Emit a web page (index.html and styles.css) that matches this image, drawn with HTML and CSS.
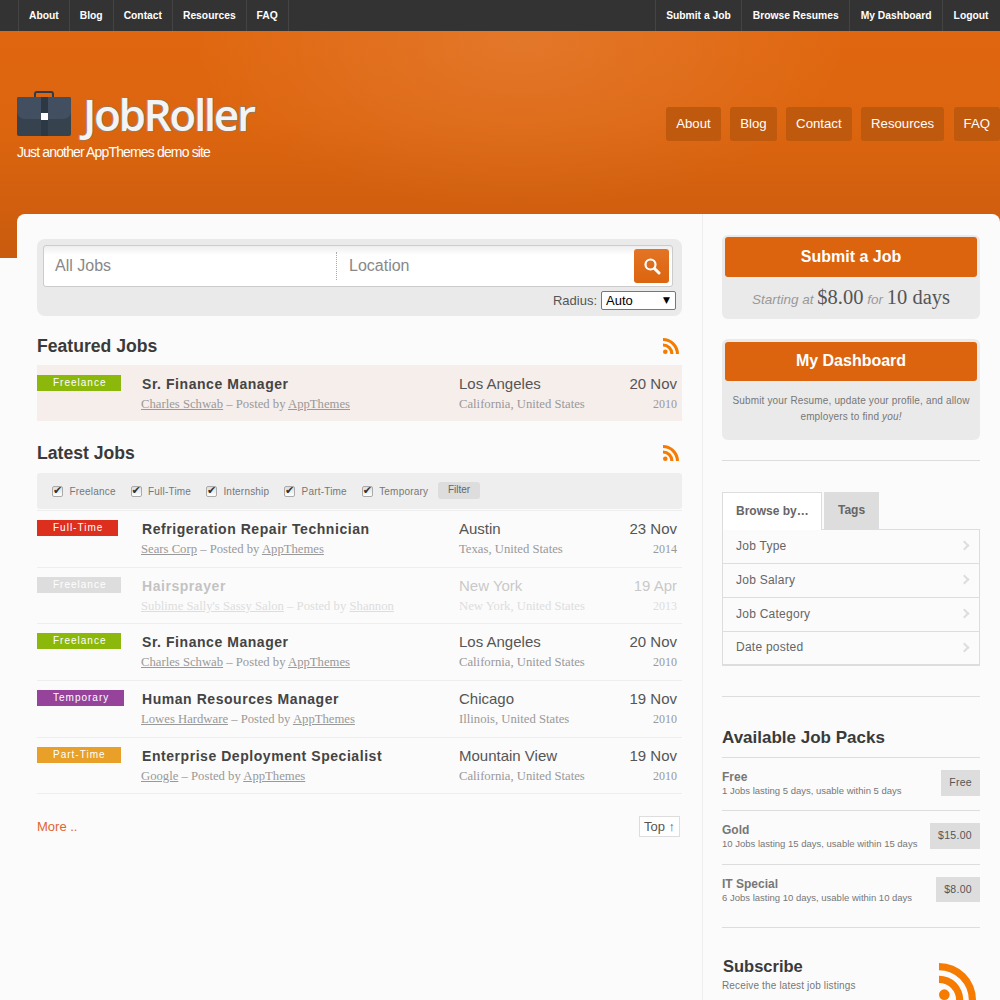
FILE: index.html
```html
<!DOCTYPE html>
<html lang="en">
<head>
<meta charset="utf-8">
<title>JobRoller</title>
<link rel="stylesheet" href="styles.css">
</head>
<body>
<nav class="topbar">
  <ul class="toplinks left">
    <li><a>About</a></li><li><a>Blog</a></li><li><a>Contact</a></li><li><a>Resources</a></li><li><a>FAQ</a></li>
  </ul>
  <ul class="toplinks right">
    <li><a>Submit a Job</a></li><li><a>Browse Resumes</a></li><li><a>My Dashboard</a></li><li><a>Logout</a></li>
  </ul>
</nav>
<header class="masthead">
  <div class="brand">
    <div class="logo">
      <svg class="case" width="54" height="45" viewBox="0 0 54 45">
        <path d="M18 7V3a2 2 0 0 1 2-2h14a2 2 0 0 1 2 2v4" fill="none" stroke="#2f3b48" stroke-width="2"/>
        <rect x="0" y="6" width="54" height="39" rx="2" fill="#36434f"/>
        <path d="M0 8a2 2 0 0 1 2-2h50a2 2 0 0 1 2 2v14q-2 6-9 6H9q-7 0-9-6z" fill="#414f61"/>
        <rect x="24" y="6" width="7" height="39" fill="#2c3844"/>
        <rect x="24" y="22" width="7" height="7" fill="#fff"/>
      </svg>
      <span class="logotext">JobRoller</span>
    </div>
    <p class="tagline">Just another AppThemes demo site</p>
  </div>
  <ul class="mainnav">
    <li>About</li><li>Blog</li><li>Contact</li><li>Resources</li><li>FAQ</li>
  </ul>
</header>
<div class="wrapper">
  <main class="content">
    <form class="search">
      <div class="searchbar">
        <span class="field what">All Jobs</span>
        <span class="field where">Location</span>
        <span class="searchbtn">
          <svg width="18" height="18" viewBox="0 0 18 18"><circle cx="7.5" cy="7.5" r="5" fill="none" stroke="#fff" stroke-width="2.2"/><path d="M11.5 11.5L16 16" stroke="#fff" stroke-width="3" stroke-linecap="round"/></svg>
        </span>
      </div>
      <div class="radius"><label>Radius:</label><span class="selectwrap"><select><option>Auto</option></select></span></div>
    </form>

    <div class="sectionhead first"><h2>Featured Jobs</h2>
      <svg class="rss" width="17" height="16" viewBox="0 0 17 16"><circle cx="2.3" cy="13.7" r="2.3" fill="#f57c00"/><path d="M0 5.5a10.5 10.5 0 0 1 10.5 10.5H7.4A7.4 7.4 0 0 0 0 8.6zM0 0a16 16 0 0 1 16 16h-3.1A12.9 12.9 0 0 0 0 3.1z" fill="#f57c00"/></svg>
    </div>
    <article class="job featured">
      <div class="tagcol"><span class="tag freelance">Freelance</span></div>
      <div class="titlecol"><h3>Sr. Finance Manager</h3><p class="meta"><a>Charles Schwab</a> – Posted by <a>AppThemes</a></p></div>
      <div class="loccol"><strong>Los Angeles</strong><p class="meta">California, United States</p></div>
      <div class="datecol"><strong>20 Nov</strong><p class="year">2010</p></div>
    </article>

    <div class="sectionhead"><h2>Latest Jobs</h2>
      <svg class="rss" width="17" height="16" viewBox="0 0 17 16"><circle cx="2.3" cy="13.7" r="2.3" fill="#f57c00"/><path d="M0 5.5a10.5 10.5 0 0 1 10.5 10.5H7.4A7.4 7.4 0 0 0 0 8.6zM0 0a16 16 0 0 1 16 16h-3.1A12.9 12.9 0 0 0 0 3.1z" fill="#f57c00"/></svg>
    </div>
    <div class="filters">
      <label><input type="checkbox" checked>Freelance</label>
      <label><input type="checkbox" checked>Full-Time</label>
      <label><input type="checkbox" checked>Internship</label>
      <label><input type="checkbox" checked>Part-Time</label>
      <label><input type="checkbox" checked>Temporary</label>
      <span class="filterbtn">Filter</span>
    </div>
    <div class="joblist">
      <article class="job">
        <div class="tagcol"><span class="tag fulltime">Full-Time</span></div>
        <div class="titlecol"><h3>Refrigeration Repair Technician</h3><p class="meta"><a>Sears Corp</a> – Posted by <a>AppThemes</a></p></div>
        <div class="loccol"><strong>Austin</strong><p class="meta">Texas, United States</p></div>
        <div class="datecol"><strong>23 Nov</strong><p class="year">2014</p></div>
      </article>
      <article class="job expired">
        <div class="tagcol"><span class="tag lapsed">Freelance</span></div>
        <div class="titlecol"><h3>Hairsprayer</h3><p class="meta"><a>Sublime Sally's Sassy Salon</a> – Posted by <a>Shannon</a></p></div>
        <div class="loccol"><strong>New York</strong><p class="meta">New York, United States</p></div>
        <div class="datecol"><strong>19 Apr</strong><p class="year">2013</p></div>
      </article>
      <article class="job">
        <div class="tagcol"><span class="tag freelance">Freelance</span></div>
        <div class="titlecol"><h3>Sr. Finance Manager</h3><p class="meta"><a>Charles Schwab</a> – Posted by <a>AppThemes</a></p></div>
        <div class="loccol"><strong>Los Angeles</strong><p class="meta">California, United States</p></div>
        <div class="datecol"><strong>20 Nov</strong><p class="year">2010</p></div>
      </article>
      <article class="job">
        <div class="tagcol"><span class="tag temporary">Temporary</span></div>
        <div class="titlecol"><h3>Human Resources Manager</h3><p class="meta"><a>Lowes Hardware</a> – Posted by <a>AppThemes</a></p></div>
        <div class="loccol"><strong>Chicago</strong><p class="meta">Illinois, United States</p></div>
        <div class="datecol"><strong>19 Nov</strong><p class="year">2010</p></div>
      </article>
      <article class="job">
        <div class="tagcol"><span class="tag parttime">Part-Time</span></div>
        <div class="titlecol"><h3>Enterprise Deployment Specialist</h3><p class="meta"><a>Google</a> – Posted by <a>AppThemes</a></p></div>
        <div class="loccol"><strong>Mountain View</strong><p class="meta">California, United States</p></div>
        <div class="datecol"><strong>19 Nov</strong><p class="year">2010</p></div>
      </article>
    </div>
    <div class="listfoot"><a class="more">More ..</a><a class="totop">Top ↑</a></div>
  </main>

  <aside class="sidebar">
    <section class="cta">
      <a class="ctabtn">Submit a Job</a>
      <p class="price"><em>Starting at</em> <b>$8.00</b> <em>for</em> <b>10 days</b></p>
    </section>
    <section class="cta dash">
      <a class="ctabtn">My Dashboard</a>
      <p class="blurb">Submit your Resume, update your profile, and allow employers to find <em>you!</em></p>
    </section>
    <hr class="rule">
    <div class="tabs"><span class="tab active">Browse by…</span><span class="tab">Tags</span></div>
    <ul class="browse">
      <li>Job Type<i class="chev"></i></li>
      <li>Job Salary<i class="chev"></i></li>
      <li>Job Category<i class="chev"></i></li>
      <li>Date posted<i class="chev"></i></li>
    </ul>
    <hr class="rule second">
    <h2 class="packhead">Available Job Packs</h2>
    <div class="pack">
      <div><h4>Free</h4><p>1 Jobs lasting 5 days, usable within 5 days</p></div><span class="cost">Free</span>
    </div>
    <div class="pack">
      <div><h4>Gold</h4><p>10 Jobs lasting 15 days, usable within 15 days</p></div><span class="cost">$15.00</span>
    </div>
    <div class="pack last">
      <div><h4>IT Special</h4><p>6 Jobs lasting 10 days, usable within 10 days</p></div><span class="cost">$8.00</span>
    </div>
    <div class="subscribe">
      <div><h2>Subscribe</h2><p>Receive the latest job listings</p></div>
      <svg width="37" height="37" viewBox="0 0 16 16"><circle cx="2.3" cy="13.7" r="2.3" fill="#f57c00"/><path d="M0 5.5a10.5 10.5 0 0 1 10.5 10.5H7.4A7.4 7.4 0 0 0 0 8.6zM0 0a16 16 0 0 1 16 16h-3.1A12.9 12.9 0 0 0 0 3.1z" fill="#f57c00"/></svg>
    </div>
  </aside>
</div>
</body>
</html>
```
FILE: styles.css
```css
* { box-sizing: border-box; }
html, body { margin: 0; height: 1000px; overflow: hidden; }
body { background: #fbfbfb; font-family: "Liberation Sans", Arial, sans-serif; color: #444; }
ul { list-style: none; margin: 0; padding: 0; }
p, h2, h3, h4 { margin: 0; }

.topbar { height: 31px; background: #333; display: flex; justify-content: space-between; }
.toplinks { display: flex; }
.toplinks.left { padding-left: 18px; }
.toplinks li { border-left: 1px solid #444; display: flex; }
.toplinks.left li:last-child { border-right: 1px solid #444; }
.toplinks a { color: #fff; font-size: 10.3px; font-weight: 700; line-height: 31px; padding: 0 10px; }
.toplinks.right { padding-right: 1px; }
.toplinks.right a { padding: 0 10.5px; }

.masthead {
  height: 227px;
  background: radial-gradient(ellipse 330px 170px at 520px 10px, rgba(255,255,255,.11), rgba(255,255,255,0)),
              linear-gradient(#e0670f 0, #dd650f 40%, #c95b0e 100%);
  display: flex;
  justify-content: space-between;
  align-items: flex-start;
  padding-left: 17px;
}
.brand { padding-top: 60px; }
.logo { display: flex; align-items: flex-end; gap: 12px; height: 45px; }
.logotext {
  font-family: "Open Sans", sans-serif;
  font-weight: 600;
  font-size: 44px;
  line-height: 50px;
  letter-spacing: -2.3px;
  color: #f4f4f4;
  -webkit-text-stroke: 1.5px #8a7f72;
  paint-order: stroke fill;
  position: relative;
  top: 3px;
}
.tagline { color: #fff; font-size: 14px; letter-spacing: -.85px; margin-top: 8px; }
.mainnav { display: flex; gap: 9.5px; margin-top: 76px; }
.mainnav li { height: 34px; line-height: 33px; padding: 0 10px; background: #bf590e; color: #fff; border-radius: 3px; font-size: 13.2px; }

.wrapper { margin: -44px 0 0 17px; height: 830px; background: #fbfbfb; border-radius: 8px 8px 0 0; display: flex; position: relative; }
.content { width: 685px; padding: 25px 20px 0; }
.search { height: 77px; background: #eaeaea; border-radius: 8px; padding: 6px; }
.searchbar {
  width: 630px; height: 42px; border: 1px solid #ccc; border-radius: 3px;
  background: linear-gradient(#eee 0, #fff 9px);
  display: flex; align-items: center; position: relative;
}
.field { font-size: 16px; color: #888; }
.what { width: 293px; padding-left: 11px; height: 28px; line-height: 28px; border-right: 1px dotted #aaa; }
.where { padding-left: 12px; height: 28px; line-height: 28px; }
.searchbtn {
  position: absolute; right: 3px; top: 3px; width: 35px; height: 34px; border-radius: 3px;
  background: linear-gradient(#e37424, #dc640f);
  display: flex; align-items: center; justify-content: center;
}
.radius { display: flex; justify-content: flex-end; align-items: center; gap: 4px; margin-top: 4px; font-size: 13px; color: #555; }
.selectwrap { position: relative; display: block; height: 19px; }
.selectwrap::after { content: "▼"; position: absolute; right: 6px; top: 4px; font: 9px/10px "DejaVu Sans", sans-serif; color: #000; pointer-events: none; }
.radius select { appearance: none; -webkit-appearance: none; display: block; width: 75px; height: 19px; background: #fff; border: 1px solid #777; border-radius: 2px; font: 13px "Liberation Sans", sans-serif; color: #000; padding: 0 0 0 4px; }

.sectionhead { display: flex; justify-content: space-between; align-items: center; height: 24px; margin: 20px 0 8px; padding-right: 2px; }
.sectionhead.first { margin: 18px 0 7px; }
.sectionhead h2 { font-size: 17.6px; line-height: 24px; color: #3a3a3a; }

.job { display: flex; height: 56.7px; padding-top: 9px; border-bottom: 1px solid #eee; }
.job.featured { height: 56px; padding-top: 10px; background: #f6eeeb; border-bottom: 0; }
.job.expired .titlecol, .job.expired .loccol, .job.expired .datecol { opacity: .3; }
.tagcol { width: 104px; }
.titlecol { width: 318px; }
.loccol { width: 140px; }
.datecol { width: 78px; text-align: right; }
.tag { display: inline-block; height: 16px; line-height: 15px; padding: 0 15px 0 16px; color: #fff; font-size: 10px; letter-spacing: 1px; vertical-align: top; }
.freelance { background: #8cb80b; }
.fulltime { background: #dc2f1e; }
.temporary { background: #96439b; }
.parttime { background: #e8a028; }
.lapsed { background: #ddd; }
.job h3 { font-size: 14px; line-height: 18px; font-weight: 700; letter-spacing: .55px; color: #444; padding-left: 1px; }
.job strong { display: block; font-size: 15px; line-height: 18px; font-weight: 400; color: #555; }
.meta { font-family: "Liberation Serif", serif; font-size: 12.7px; line-height: 16px; margin-top: 3px; color: #999; }
.meta a { text-decoration: underline; }
.year { font-family: "Liberation Serif", serif; font-size: 12px; line-height: 16px; margin-top: 3px; color: #999; }

.filters { height: 36px; background: #eee; border-radius: 3px; display: flex; align-items: center; padding: 0 0 0 15px; font-size: 10px; letter-spacing: .2px; color: #777; margin-bottom: 1px; }
.filters label { display: flex; align-items: center; gap: 6.5px; margin-right: 14.75px; }
.filters input {
  appearance: none; -webkit-appearance: none; margin: 0; width: 11px; height: 11px;
  border: 1px solid #aaa; border-radius: 2px; background: linear-gradient(#ddd, #fff); position: relative;
}
.filters input::before { content: "✔"; position: absolute; left: 0; top: -2px; font: 700 11px/12px "DejaVu Sans", sans-serif; color: #333; }
.filterbtn { background: #ddd; color: #666; border-radius: 3px; height: 17px; line-height: 16px; padding: 0 10px; letter-spacing: 0; margin-left: -5px; margin-top: -2px; }
.joblist { border-top: 1px solid #eee; }

.listfoot { display: flex; justify-content: space-between; align-items: center; margin-top: 21.5px; padding-right: 2px; }
.more { color: #e0662c; font-size: 13px; }
.totop { border: 1px solid #ddd; background: #fff; width: 41px; height: 21px; line-height: 19px; text-align: center; font-size: 13px; color: #555; }

.sidebar { width: 298px; border-left: 1px solid #eee; padding: 21px 20px 0 19px; }
.cta { background: #eaeaea; border-radius: 6px; height: 84px; padding: 2px 3px; margin-bottom: 20px; }
.cta.dash { height: 101px; padding-top: 3px; margin-bottom: 20px; }
.ctabtn { display: block; height: 40px; line-height: 39px; background: #dc640f; border-radius: 3px; color: #fff; font-size: 16px; font-weight: 700; text-align: center; }
.dash .ctabtn { height: 39px; line-height: 38px; }
.price { text-align: center; line-height: 36px; margin-top: 2px; color: #999; font-size: 13.5px; }
.price b { font-family: "Liberation Serif", serif; font-weight: 400; font-size: 20.5px; color: #555; }
.blurb { font-size: 10px; line-height: 16px; letter-spacing: .15px; text-align: center; color: #777; margin-top: 12px; }
.rule { border: 0; border-top: 1px solid #ddd; margin: 0 0 31px; height: 1px; }
.rule.second { margin: 30px 0 0; }
.tabs { display: flex; gap: 2px; height: 37px; position: relative; }
.tab { background: #ddd; color: #666; font-size: 12px; font-weight: 700; line-height: 37px; padding: 0 14px; white-space: nowrap; }
.tab.active { background: #fff; border: 1px solid #ddd; border-bottom: 0; width: 100px; padding: 0 13px; line-height: 36px; height: 38px; position: relative; z-index: 1; }
.browse { border: 1px solid #ddd; border-bottom-width: 2px; height: 137px; }
.browse li { height: 34px; padding: 0 13px 2px; border-bottom: 1px solid #ddd; font-size: 12px; letter-spacing: .25px; color: #666; display: flex; justify-content: space-between; align-items: center; }
.browse li:last-child { border-bottom: 0; height: 32px; }
.chev { width: 7px; height: 7px; border-top: 2px solid #ddd; border-right: 2px solid #ddd; transform: rotate(45deg); margin-right: -2px; }
.packhead { font-size: 17px; line-height: 20px; color: #3a3a3a; padding: 31px 0 9px; border-bottom: 1px solid #ddd; }
.pack { height: 53.3px; padding-top: 12px; border-bottom: 1px solid #ddd; display: flex; justify-content: space-between; align-items: flex-start; }
.pack.last { height: 63.4px; }
.pack h4 { font-size: 12px; line-height: 14px; font-weight: 700; color: #777; }
.pack p { font-size: 9.5px; line-height: 14px; color: #777; }
.cost { height: 25.5px; line-height: 25px; padding: 0 8px; background: #ddd; color: #555; font-size: 10.5px; letter-spacing: .3px; }
.subscribe { display: flex; justify-content: space-between; align-items: flex-start; padding: 28px 4px 0 1px; }
.subscribe h2 { font-size: 16.5px; line-height: 20px; color: #3a3a3a; }
.subscribe p { font-size: 10px; line-height: 14px; letter-spacing: .15px; color: #777; margin-top: 3px; margin-left: -1px; }
.subscribe svg { margin-top: 7px; }
```
